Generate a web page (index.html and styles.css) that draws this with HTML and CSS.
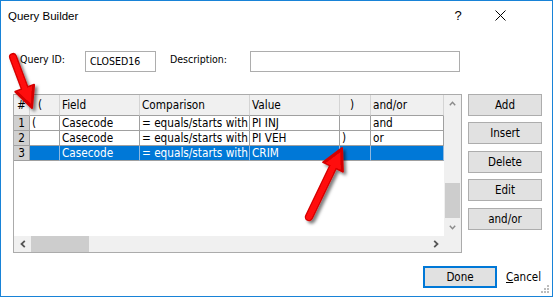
FILE: index.html
```html
<!DOCTYPE html>
<html>
<head>
<meta charset="utf-8">
<link rel="stylesheet" href="styles.css">
</head>
<body>
<div class="window">
  <div class="titlebar">
    <span class="title">Query Builder</span>
    <span class="tb-btn help">?</span>
    <span class="tb-btn close"><svg width="11" height="11" viewBox="0 0 11 11"><path d="M0.5 0.5 L10.5 10.5 M10.5 0.5 L0.5 10.5" stroke="#000" stroke-width="1" fill="none"/></svg></span>
  </div>

  <div class="form-row">
    <span class="lbl lbl-id">Query ID:</span>
    <div class="textbox tb-id">CLOSED16</div>
    <span class="lbl lbl-desc">Description:</span>
    <div class="textbox tb-desc"></div>
  </div>

  <div class="main">
    <div class="grid">
      <div class="data">
        <div class="table">
          <div class="cell hd hd-num">#</div>
          <div class="cell hd hd-paren">(</div>
          <div class="cell hd">Field</div>
          <div class="cell hd">Comparison</div>
          <div class="cell hd">Value</div>
          <div class="cell hd hd-close">)</div>
          <div class="cell hd">and/or</div>

          <div class="cell rh">1</div>
          <div class="cell">(</div>
          <div class="cell">Casecode</div>
          <div class="cell">= equals/starts with</div>
          <div class="cell">PI INJ</div>
          <div class="cell"></div>
          <div class="cell">and</div>

          <div class="cell rh">2</div>
          <div class="cell"></div>
          <div class="cell">Casecode</div>
          <div class="cell">= equals/starts with</div>
          <div class="cell">PI VEH</div>
          <div class="cell">)</div>
          <div class="cell">or</div>

          <div class="cell rh">3</div>
          <div class="cell sel"></div>
          <div class="cell sel">Casecode</div>
          <div class="cell sel">= equals/starts with</div>
          <div class="cell sel">CRIM</div>
          <div class="cell sel"></div>
          <div class="cell sel"></div>
        </div>
      </div>
      <div class="vscroll">
        <div class="sb-btn"><svg width="7" height="5" viewBox="0 0 7 5"><polyline points="0.8,4.2 3.5,1.2 6.2,4.2" fill="none" stroke="#8a8a8a" stroke-width="1.4"/></svg></div>
        <div class="vtrack"><div class="vthumb"></div></div>
        <div class="sb-btn"><svg width="7" height="5" viewBox="0 0 7 5"><polyline points="0.8,0.8 3.5,3.8 6.2,0.8" fill="none" stroke="#8a8a8a" stroke-width="1.4"/></svg></div>
      </div>
      <div class="hscroll">
        <div class="hs-btn"><svg width="6" height="8" viewBox="0 0 6 8"><polyline points="4.8,0.8 1.5,4 4.8,7.2" fill="none" stroke="#555" stroke-width="1.8"/></svg></div>
        <div class="hthumb"></div>
        <div class="htrack"></div>
        <div class="hs-btn"><svg width="6" height="8" viewBox="0 0 6 8"><polyline points="1.2,0.8 4.5,4 1.2,7.2" fill="none" stroke="#555" stroke-width="1.8"/></svg></div>
      </div>
      <div class="corner"></div>
    </div>

    <div class="buttons">
      <button class="btn">Add</button>
      <button class="btn gap6">Insert</button>
      <button class="btn gap7">Delete</button>
      <button class="btn gap6">Edit</button>
      <button class="btn gap7">and/or</button>
    </div>
  </div>

  <div class="footer">
    <button class="btn-done">Done</button>
    <span class="cancel"><span class="ul">C</span>ancel</span>
  </div>

  <svg class="grip" width="8" height="8" viewBox="0 0 8 8">
    <rect x="6" y="0" width="2" height="2" fill="#bcbcbc"/>
    <rect x="3" y="3" width="2" height="2" fill="#bcbcbc"/>
    <rect x="6" y="3" width="2" height="2" fill="#bcbcbc"/>
    <rect x="0" y="6" width="2" height="2" fill="#bcbcbc"/>
    <rect x="3" y="6" width="2" height="2" fill="#bcbcbc"/>
    <rect x="6" y="6" width="2" height="2" fill="#bcbcbc"/>
  </svg>

  <svg class="arrows" width="553" height="297" viewBox="0 0 553 297">
    <defs>
      <filter id="sh" x="-50%" y="-50%" width="200%" height="200%">
        <feDropShadow dx="2.5" dy="2.5" stdDeviation="1.4" flood-color="#000" flood-opacity="0.5"/>
      </filter>
    </defs>
    <g filter="url(#sh)">
      <line x1="13" y1="57" x2="25" y2="89" stroke="#d40000" stroke-width="8" stroke-linecap="round"/>
      <polygon points="15.3,91.8 34.1,84.8 32,108" fill="#d40000" stroke="#d40000" stroke-width="2" stroke-linejoin="round"/>
      <line x1="13" y1="57" x2="25" y2="89" stroke="#ff0a0a" stroke-width="5.5" stroke-linecap="round"/>
      <polygon points="17.5,91.3 32,86 31,104" fill="#ff0a0a"/>
    </g>
    <g filter="url(#sh)">
      <line x1="309" y1="217" x2="333" y2="167" stroke="#d40000" stroke-width="8.5" stroke-linecap="round"/>
      <polygon points="323.1,162.2 342.9,171.6 342,148" fill="#d40000" stroke="#d40000" stroke-width="2" stroke-linejoin="round"/>
      <line x1="309" y1="217" x2="333" y2="167" stroke="#ff0a0a" stroke-width="6" stroke-linecap="round"/>
      <polygon points="325.5,163 340.8,170 340.5,152" fill="#ff0a0a"/>
    </g>
  </svg>
</div>
</body>
</html>
```

FILE: styles.css
```css
body {
  margin: 0;
}

.window {
  position: relative;
  width: 553px;
  height: 297px;
  box-sizing: border-box;
  border: 1px solid #1883d7;
  background: #fff;
  font-family: "DejaVu Sans Condensed", "DejaVu Sans", sans-serif;
  font-size: 11px;
  color: #000;
  overflow: hidden;
}

.titlebar {
  display: flex;
  align-items: center;
  height: 29px;
  padding-left: 7px;
  padding-right: 31px;
  font-family: "Liberation Sans", Arial, sans-serif;
  font-size: 11.5px;
}

.title {
  flex: 1;
}

.tb-btn {
  width: 42px;
  display: flex;
  justify-content: center;
  align-items: center;
}

.help {
  font-size: 13px;
}

.form-row {
  display: flex;
  align-items: flex-start;
  margin-top: 21px;
  padding-left: 19px;
  height: 21px;
  font-size: 10.5px;
}

.lbl {
  line-height: 16px;
}

.lbl-id {
  width: 65px;
}

.lbl-desc {
  width: 80px;
  margin-left: 14px;
}

.textbox {
  height: 21px;
  box-sizing: border-box;
  border: 1px solid #adadad;
  padding-left: 4px;
  line-height: 19px;
}

.tb-id {
  width: 71px;
}

.tb-desc {
  width: 210px;
}

.main {
  display: flex;
  margin-top: 22px;
  padding-left: 12px;
}

.grid {
  width: 449px;
  height: 159px;
  box-sizing: border-box;
  border: 1px solid #ababab;
  display: grid;
  grid-template-columns: 430px 17px;
  grid-template-rows: 141px 16px;
}

.data {
  background: #fff;
  overflow: hidden;
}

.table {
  display: grid;
  grid-template-columns: 16px 30px 80px 110px 90px 31px 73px;
  grid-template-rows: 21px 15px 15px 15px;
}

.cell {
  box-sizing: border-box;
  border-right: 1px solid #a0a0a0;
  border-bottom: 1px solid #a0a0a0;
  padding-left: 2px;
  white-space: nowrap;
  overflow: hidden;
  line-height: 14px;
  font-size: 11.7px;
}

.hd {
  background: #f0f0f0;
  border-right-color: #d4d4d4;
  line-height: 21px;
}

.hd-num {
  padding-left: 3px;
}

.hd-paren {
  padding-left: 8px;
}

.hd-close {
  padding-left: 10px;
}

.rh {
  background: #d0d0d0;
  text-align: center;
  padding-left: 0;
}

.sel {
  background: #0078d7;
  color: #fff;
  border-right-color: #8fb8e0;
}

.vscroll {
  background: #f0f0f0;
  display: flex;
  flex-direction: column;
}

.sb-btn {
  height: 17px;
  display: flex;
  align-items: center;
  justify-content: center;
}

.vtrack {
  flex: 1;
  padding-top: 71px;
}

.vthumb {
  height: 35px;
  margin: 0 1px;
  background: #cdcdcd;
}

.hscroll {
  background: #f0f0f0;
  display: flex;
}

.hs-btn {
  width: 17px;
  display: flex;
  align-items: center;
  justify-content: center;
}

.hthumb {
  width: 58px;
  background: #cdcdcd;
}

.htrack {
  flex: 1;
}

.corner {
  background: #f0f0f0;
}

.buttons {
  margin-left: 6px;
  display: flex;
  flex-direction: column;
}

.btn {
  width: 74px;
  height: 22px;
  box-sizing: border-box;
  border: 1px solid #adadad;
  background: #e1e1e1;
  font-family: inherit;
  font-size: 11.5px;
  color: #000;
  padding: 0;
}

.gap6 {
  margin-top: 6px;
}

.gap7 {
  margin-top: 7px;
}

.footer {
  display: flex;
  align-items: center;
  margin-top: 13px;
  padding-left: 422px;
}

.btn-done {
  width: 74px;
  height: 22px;
  box-sizing: border-box;
  border: 2px solid #0078d7;
  background: #e1e1e1;
  font-family: inherit;
  font-size: 11.5px;
  color: #000;
  padding: 0;
}

.cancel {
  margin-left: 9px;
  font-size: 11.5px;
}

.ul {
  text-decoration: underline;
}

.grip {
  position: absolute;
  right: 3px;
  bottom: 3px;
}

.arrows {
  position: absolute;
  left: -1px;
  top: -1px;
  pointer-events: none;
}
```
